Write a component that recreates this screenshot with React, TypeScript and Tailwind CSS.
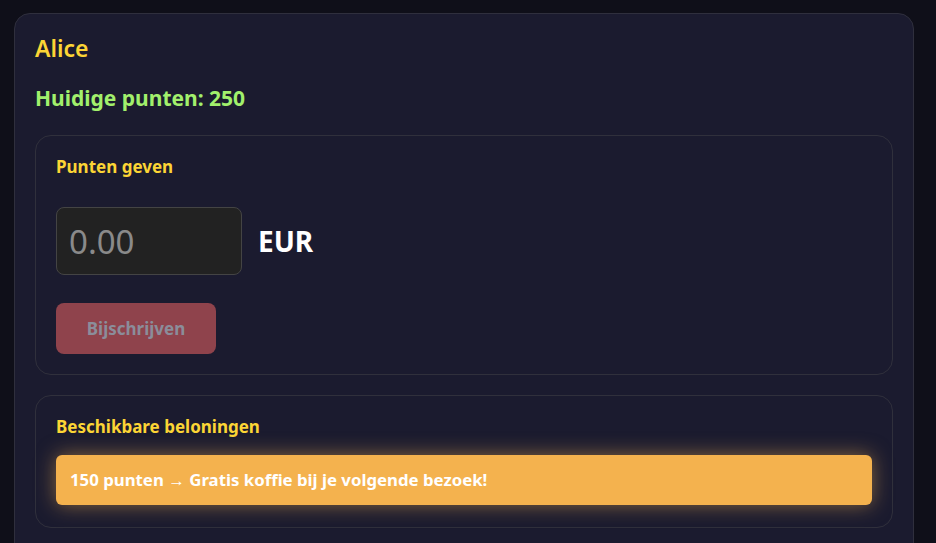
import React from 'react';

const font = { fontFamily: '"Noto Sans", "Open Sans", sans-serif' };

export default function App() {
  return (
    <div className="min-h-[543px] bg-[#0f0f19] pt-[13px] pl-[14px]" style={font}>
      <div className="w-[900px] rounded-[16px] border border-[#2f2f3d] bg-[#1b1b2f] px-[20px] pt-[19px] pb-[40px]">
        <h1 className="text-[23px] font-semibold leading-[30px] text-[#fcd535]">Alice</h1>
        <p className="mt-[20px] text-[21px] font-bold leading-[30px] text-[#a2f06c]">Huidige punten: 250</p>

        <div className="mt-[22px] rounded-[16px] border border-[#30303c] px-[20px] pt-[19px] pb-[20px]">
          <h2 className="text-[17px] font-bold leading-[24px] text-[#fcd535]">Punten geven</h2>
          <div className="mt-[28px] flex items-center gap-[16px]">
            <input
              type="number"
              placeholder="0.00"
              className="h-[68px] w-[186px] rounded-[8px] border border-[#444444] bg-[#222222] px-[12px] text-[33px] text-white placeholder:text-[#8a8a8a] outline-none"
              style={font}
            />
            <span className="text-[28px] font-bold text-white">EUR</span>
          </div>
          <button
            disabled
            className="mt-[28px] h-[51px] w-[160px] rounded-[8px] bg-[#8f434c] text-[17px] font-bold text-[#8b8d9a]"
            style={font}
          >
            Bijschrijven
          </button>
        </div>

        <div className="mt-[20px] rounded-[16px] border border-[#30303c] px-[20px] pt-[19px] pb-[22px]">
          <h2 className="text-[17px] font-bold leading-[24px] text-[#fcd535]">Beschikbare beloningen</h2>
          <div className="mt-[16px] flex h-[50px] items-center rounded-[6px] bg-[#f4b24e] px-[14px] text-[16.8px] font-bold text-white shadow-[0_0_20px_rgba(244,178,78,0.5)]">
            150 punten → Gratis koffie bij je volgende bezoek!
          </div>
        </div>
      </div>
    </div>
  );
}
